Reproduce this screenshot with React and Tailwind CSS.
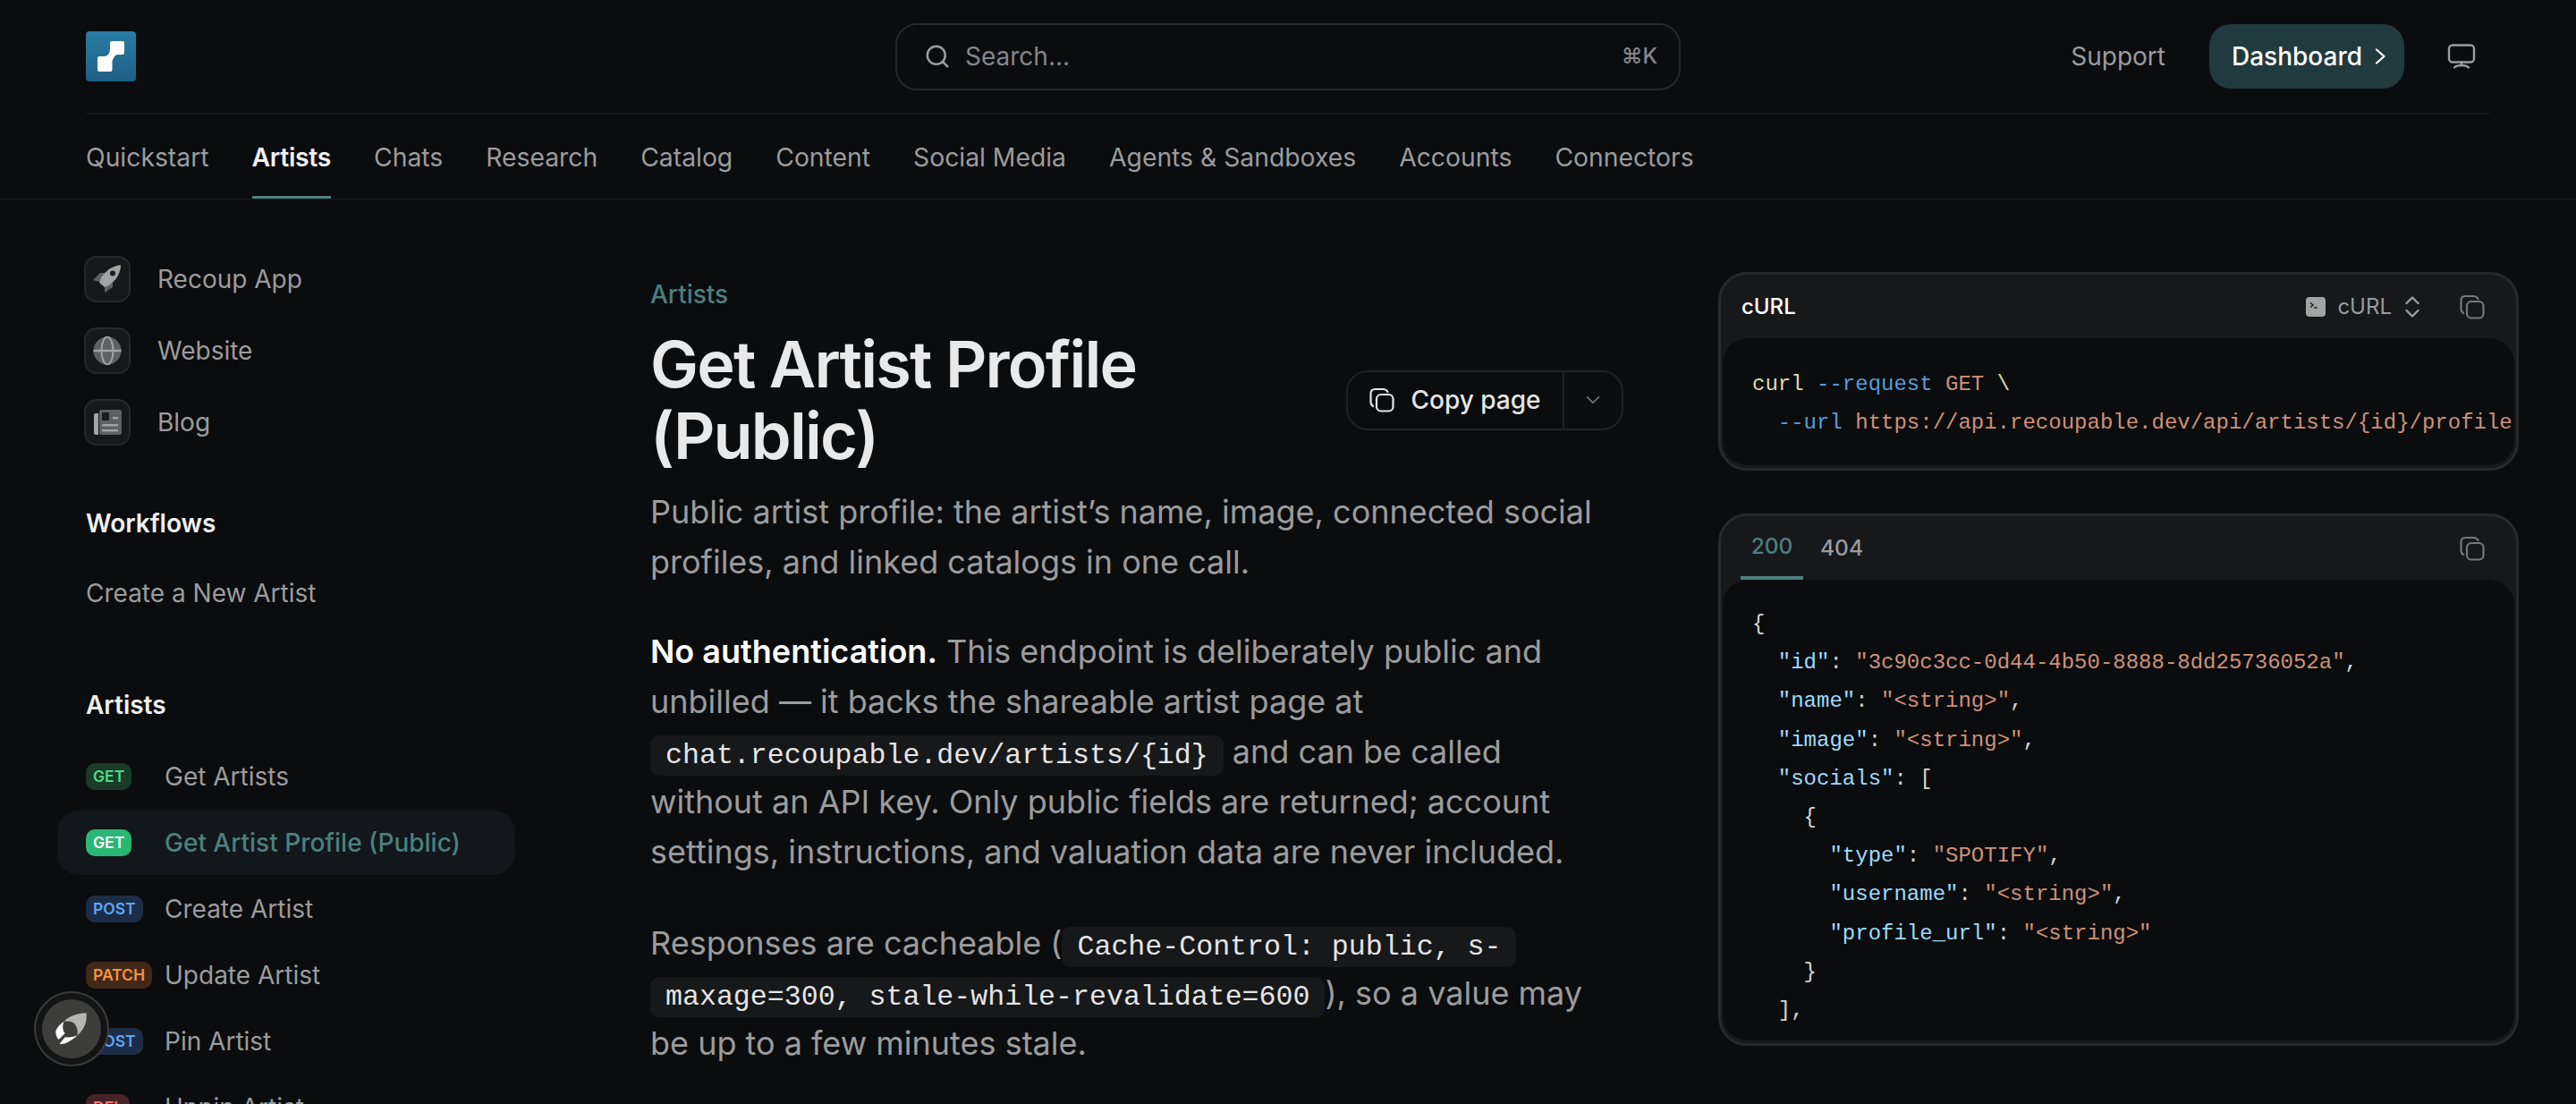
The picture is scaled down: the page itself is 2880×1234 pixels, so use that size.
import { Search, ChevronDown } from 'lucide-react'

const tabs = ['Quickstart', 'Artists', 'Chats', 'Research', 'Catalog', 'Content', 'Social Media', 'Agents & Sandboxes', 'Accounts', 'Connectors']

const badgeStyles = {
  GET: 'bg-[#1a3a2a] text-[#4ade80]',
  ACTIVE: 'bg-[#2ab673] text-white',
  POST: 'bg-[#1c2d47] text-[#60a5fa]',
  PATCH: 'bg-[#41291a] text-[#fb923c]',
  DEL: 'bg-[#472226] text-[#f87171]',
}

const endpoints = [
  { method: 'GET', name: 'Get Artists' },
  { method: 'GET', name: 'Get Artist Profile (Public)', active: true },
  { method: 'POST', name: 'Create Artist' },
  { method: 'PATCH', name: 'Update Artist' },
  { method: 'POST', name: 'Pin Artist' },
  { method: 'DEL', name: 'Unpin Artist' },
]

function RocketIcon() {
  return (
    <svg viewBox="0 0 32 32" className="w-8 h-8">
      <path d="M0 17 L8 9 L13 9 L7 19 Z" fill="#5f6061" />
      <path d="M13 31 L13 24 L22 18 L22 25 Z" fill="#5f6061" />
      <path d="M7 20 C9 11 18 2 31 0 C31 12 22 22 13 25 Z" fill="#a3a3a3" />
      <circle cx="22" cy="9.5" r="3" fill="#1a1b1d" />
    </svg>
  )
}

function GlobeIcon() {
  return (
    <svg viewBox="0 0 32 32" className="w-8 h-8">
      <circle cx="16" cy="16" r="15.5" fill="#5f6061" />
      <ellipse cx="16" cy="16" rx="6.5" ry="15.5" fill="none" stroke="#a3a3a3" strokeWidth="2" />
      <path d="M0.5 16 H31.5" stroke="#a3a3a3" strokeWidth="2.4" />
    </svg>
  )
}

function NewsIcon() {
  return (
    <svg viewBox="0 0 32 32" className="w-8 h-8">
      <path d="M3 6 H6 V30 H3 Q1 30 1 28 V8 Q1 6 3 6 Z" fill="#a3a3a3" />
      <rect x="7" y="2" width="25" height="28" rx="2.5" fill="#5f6061" />
      <rect x="10" y="5" width="8" height="9" rx="1" fill="#1a1b1d" />
      <rect x="22" y="10" width="6" height="2.4" fill="#a3a3a3" />
      <rect x="10" y="18" width="18" height="2.4" fill="#a3a3a3" />
      <rect x="10" y="24" width="18" height="2.4" fill="#a3a3a3" />
    </svg>
  )
}

function CopyIcon({ className }) {
  return (
    <svg viewBox="0 0 28 28" fill="none" stroke="currentColor" strokeWidth="2.2" strokeLinecap="round" className={className}>
      <path d="M4 21 C2.5 20 1.5 18 1.5 16 V7 C1.5 4 3.5 2 6.5 2 H15 C17.5 2 19.5 3 20.5 5" />
      <rect x="8" y="8" width="18.5" height="18.5" rx="5" />
    </svg>
  )
}

function LinkItem({ icon, label }) {
  return (
    <div className="flex items-center gap-[30px] h-[52px]">
      <div className="w-[52px] h-[52px] rounded-[14px] border-2 border-[#26272a] bg-[#17181a] flex items-center justify-center">
        {icon}
      </div>
      <span className="text-[28px] text-[#9b9c9d]">{label}</span>
    </div>
  )
}

function Endpoint({ method, name, active }) {
  return (
    <div className={`-mx-8 px-8 h-[72px] -my-[1px] rounded-[24px] flex items-center ${active ? 'bg-[#11171a]' : ''}`}>
      <div className="w-[88px] shrink-0">
        <span className={`inline-flex items-center h-[30px] px-2 rounded-[10px] text-[17.5px] font-semibold leading-none ${badgeStyles[active ? 'ACTIVE' : method]}`}>
          {method}
        </span>
      </div>
      <span className={`text-[28px] whitespace-nowrap ${active ? 'text-[#4d7f80] font-medium' : 'text-[#9b9c9d]'}`}>{name}</span>
    </div>
  )
}

function InlineCode({ children }) {
  return (
    <code className="font-['Liberation_Mono',monospace] leading-none text-[#e5e5e5] text-[31.6px] bg-[#17181a] rounded-[10px] px-[17px] py-[5px] [box-decoration-break:clone]">
      {children}
    </code>
  )
}

const k = 'text-[#9cdcfe]'
const s = 'text-[#ce9178]'

function JsonLine({ indent, name, value, tail = '' }) {
  return (
    <div>
      {' '.repeat(indent)}
      {name && <span className={k}>"{name}"</span>}
      {name && ': '}
      {value && (value.startsWith('"') ? <span className={s}>{value}</span> : value)}
      {tail}
    </div>
  )
}

export default function App() {
  return (
    <div className="h-[1234px] overflow-hidden relative bg-[#0b0c0e] font-['Inter',sans-serif] text-[#9b9c9d]">
      {/* Top bar */}
      <header className="border-b-2 border-[#15161a]">
        <div className="mx-[96px] h-[128px] border-b-2 border-[#15161a] grid grid-cols-[1fr_878px_1fr] items-center">
          <div>
            <svg viewBox="0 0 56 56" className="w-14 h-14">
              <defs>
                <linearGradient id="logo" x1="0" y1="0" x2="0" y2="1">
                  <stop offset="0" stopColor="#2a7da3" />
                  <stop offset="1" stopColor="#1f5f85" />
                </linearGradient>
              </defs>
              <rect width="56" height="56" rx="4" fill="url(#logo)" />
              <path d="M29 11 H41 Q43 11 43 13 V24 Q43 26 41 26 H36 Q33 26 31.5 29 Q29.5 32 29.5 34 V43 Q29.5 45 27.5 45 H15 Q13 45 13 43 V30 Q13 28 15 28 H20 Q24 28 25.5 25 Q27 23 27 20 V13 Q27 11 29 11 Z" fill="#fff" />
            </svg>
          </div>
          <div className="h-[75px] rounded-[24px] border-2 border-[#26272a] flex items-center pl-[30px] pr-[24px]">
            <Search className="w-[30px] h-[30px] text-[#9b9c9d]" strokeWidth={2} />
            <span className="ml-[16px] text-[28px] text-[#85868a]">Search...</span>
            <span className="ml-auto text-[24px] font-medium text-[#85868a]">⌘K</span>
          </div>
          <div className="flex items-center justify-end pr-[16px]">
            <span className="text-[28px] text-[#9b9c9d]">Support</span>
            <div className="ml-[49px] h-[72px] w-[218px] rounded-[24px] bg-[#213a3f] flex items-center pl-[25px] gap-[14px] text-white text-[28px] font-medium">
              Dashboard
              <svg viewBox="0 0 12 18" fill="none" stroke="currentColor" strokeWidth="2.2" strokeLinecap="round" strokeLinejoin="round" className="w-[12px] h-[18px]">
                <path d="M2 1.5 L10.5 9 L2 16.5" />
              </svg>
            </div>
            <svg viewBox="0 0 32 28" fill="none" stroke="currentColor" strokeWidth="2.4" strokeLinecap="round" className="ml-[48px] w-[32px] h-[28px] text-[#9b9c9d]">
              <rect x="2" y="1.5" width="28" height="19" rx="4" />
              <path d="M16 20.5 V24 M8 26.5 C10 24.5 13 24 16 24 C19 24 22 24.5 24 26.5" />
            </svg>
          </div>
        </div>
        <nav className="mx-[96px] h-[94px] flex gap-[48px]">
          {tabs.map(t => (
            <div key={t} className={`h-full pt-[5px] flex items-center text-[28.3px] -mb-[2px] border-b-[3px] whitespace-nowrap ${t === 'Artists' ? 'text-[#f0f0f0] font-semibold tracking-[-0.3px] border-[#4d7f80]' : 'text-[#9b9c9d] border-transparent'}`}>
              {t}
            </div>
          ))}
        </nav>
      </header>

      <div className="flex pl-[96px]">
        {/* Sidebar */}
        <aside className="w-[631px] shrink-0 pt-[62px]">
          <div className="w-[448px] -ml-[2px] flex flex-col gap-[28px]">
            <LinkItem icon={<RocketIcon />} label="Recoup App" />
            <LinkItem icon={<GlobeIcon />} label="Website" />
            <LinkItem icon={<NewsIcon />} label="Blog" />
          </div>
          <div className="w-[448px] mt-[66px] text-[28px] font-semibold text-[#f0f0f0]">Workflows</div>
          <div className="w-[448px] mt-[36px] text-[28px]">Create a New Artist</div>
          <div className="w-[448px] mt-[83px] text-[28px] font-semibold text-[#f0f0f0]">Artists</div>
          <div className="w-[448px] mt-[24px] flex flex-col gap-[4px]">
            {endpoints.map(e => <Endpoint key={e.name} {...e} />)}
          </div>
        </aside>

        {/* Page body */}
        <main className="w-[1088px] shrink-0 pt-[87px]">
          <div className="text-[28px] leading-[36px] font-medium text-[#4d7f80]">Artists</div>
          <div className="mt-[20px] flex items-center justify-between">
            <h1 className="w-[700px] text-[72px] leading-[80px] font-semibold tracking-[-1.8px] text-[#e9e9e9]">Get Artist Profile (Public)</h1>
            <div className="h-[67px] w-[310px] rounded-[24px] border-2 border-[#1f2023] flex items-center">
              <div className="flex-1 h-full flex items-center justify-center gap-[18px] border-r-2 border-[#1f2023] text-[28px] font-medium text-[#e5e5e5]">
                <CopyIcon className="w-[28px] h-[28px]" />
                Copy page
              </div>
              <div className="w-[64px] flex justify-center">
                <ChevronDown className="w-[26px] h-[26px] text-[#77787a]" strokeWidth={1.6} />
              </div>
            </div>
          </div>
          <p className="mt-[17px] text-[36px] leading-[56px] text-[#9b9c9d]">
            Public artist profile: the artist’s name, image, connected social profiles, and linked catalogs in one call.
          </p>
          <p className="mt-[44px] pr-[12px] text-[36px] leading-[56px]">
            <strong className="font-semibold text-white">No authentication.</strong> This endpoint is deliberately public and unbilled — it backs the shareable artist page at <InlineCode>chat.recoupable.dev/artists/{'{id}'}</InlineCode> and can be called without an API key. Only public fields are returned; account settings, instructions, and valuation data are never included.
          </p>
          <p className="mt-[46px] text-[36px] leading-[56px]">
            Responses are cacheable (<InlineCode>Cache-Control: public, s-maxage=300, stale-while-revalidate=600</InlineCode>), so a value may be up to a few minutes stale.
          </p>
        </main>

        {/* Request and response samples */}
        <section className="ml-[106px] w-[895px] shrink-0 pt-[80px] flex flex-col gap-[48px] font-['Liberation_Mono',monospace] text-[24px] leading-[43.2px] whitespace-pre">
          <div className="h-[222px] rounded-[32px] border-[3px] border-[#27282b] bg-[#17181a] flex flex-col font-['Inter',sans-serif]">
            <div className="h-[71px] shrink-0 flex items-center pl-[23px] pr-[35px] text-[24px]">
              <span className="font-medium text-white">cURL</span>
              <svg viewBox="0 0 22 22" className="ml-auto w-[22px] h-[22px]">
                <rect width="22" height="22" rx="4" fill="#a3a3a3" />
                <path d="M5 6.5 L8 9 L5 11.5 M9 12 H12.5" fill="none" stroke="#17181a" strokeWidth="1.4" />
              </svg>
              <span className="ml-[13px] text-[#9b9c9d]">cURL</span>
              <svg viewBox="0 0 16 24" fill="none" stroke="currentColor" strokeWidth="2.4" strokeLinecap="round" strokeLinejoin="round" className="ml-[15px] w-[16px] h-[24px] text-[#9b9c9d]">
                <path d="M1.5 8 L8 1.5 L14.5 8 M1.5 16 L8 22.5 L14.5 16" />
              </svg>
              <CopyIcon className="ml-[45px] w-[28px] h-[28px] text-[#77787a]" />
            </div>
            <div className="flex-1 mx-[2px] mb-[3px] rounded-[28px] bg-[#0b0c0e] overflow-hidden pt-[30px] pl-[33px] font-['Liberation_Mono',monospace] text-[#d4d4d4]">
              <div><span className="text-[#dcdcaa]">curl</span> <span className="text-[#569cd6]">--request</span> <span className="text-[#ce9178]">GET</span> <span className="text-[#dcdcaa]">\</span></div>
              <div>  <span className="text-[#569cd6]">--url</span> <span className="text-[#ce9178]">https://api.recoupable.dev/api/artists/{'{id}'}/profile</span></div>
            </div>
          </div>

          <div className="h-[595px] rounded-[32px] border-[3px] border-[#27282b] bg-[#17181a] flex flex-col">
            <div className="h-[71px] shrink-0 flex items-start pl-[22px] pr-[35px] font-['Inter',sans-serif] text-[24.5px]">
              <div className="w-[70px] h-[71px] flex items-center justify-center border-b-4 border-[#4d7f80] text-[#4d7f80] font-medium">200</div>
              <div className="ml-[19px] h-[71px] flex items-center text-[#9b9c9d] font-medium">404</div>
              <div className="ml-auto h-[71px] flex items-center"><CopyIcon className="w-[28px] h-[28px] text-[#77787a]" /></div>
            </div>
            <div className="flex-1 mx-[2px] mb-[3px] rounded-[28px] bg-[#0b0c0e] overflow-hidden pt-[28px] pl-[33px] text-[#d4d4d4]">
              <JsonLine indent={0} value="{" />
              <JsonLine indent={2} name="id" value={'"3c90c3cc-0d44-4b50-8888-8dd25736052a"'} tail="," />
              <JsonLine indent={2} name="name" value={'"<string>"'} tail="," />
              <JsonLine indent={2} name="image" value={'"<string>"'} tail="," />
              <JsonLine indent={2} name="socials" value="[" />
              <JsonLine indent={4} value="{" />
              <JsonLine indent={6} name="type" value={'"SPOTIFY"'} tail="," />
              <JsonLine indent={6} name="username" value={'"<string>"'} tail="," />
              <JsonLine indent={6} name="profile_url" value={'"<string>"'} />
              <JsonLine indent={4} value="}" />
              <JsonLine indent={2} value="]" tail="," />
              <div className="mt-[3px]">
                <JsonLine indent={2} name="catalogs" value="[" />
              </div>
            </div>
          </div>
        </section>
      </div>

      {/* Floating assistant button */}
      <div className="absolute left-[38px] top-[1108px] w-[84px] h-[84px] rounded-full border-2 border-[#3a3b3c] bg-[#141414] flex items-center justify-center">
        <div className="w-[66px] h-[66px] rounded-full bg-[#3d3d3c] flex items-center justify-center">
          <svg viewBox="90 90 120 120" className="w-10 h-10">
            <path d="M125 125 C140 108 170 98 200 97 C202 125 195 150 170 172 C172 150 165 128 145 125 C138 124 130 124 125 125 Z" fill="#b5b5b5" />
            <path d="M125 125 C110 135 97 150 97 160 C97 172 100 180 107 186 L128 165 C120 155 118 138 125 125 Z" fill="#fff" />
            <path d="M110 200 C125 205 150 190 170 172 C155 178 140 180 128 178 Z" fill="#fff" />
          </svg>
        </div>
      </div>
    </div>
  )
}
